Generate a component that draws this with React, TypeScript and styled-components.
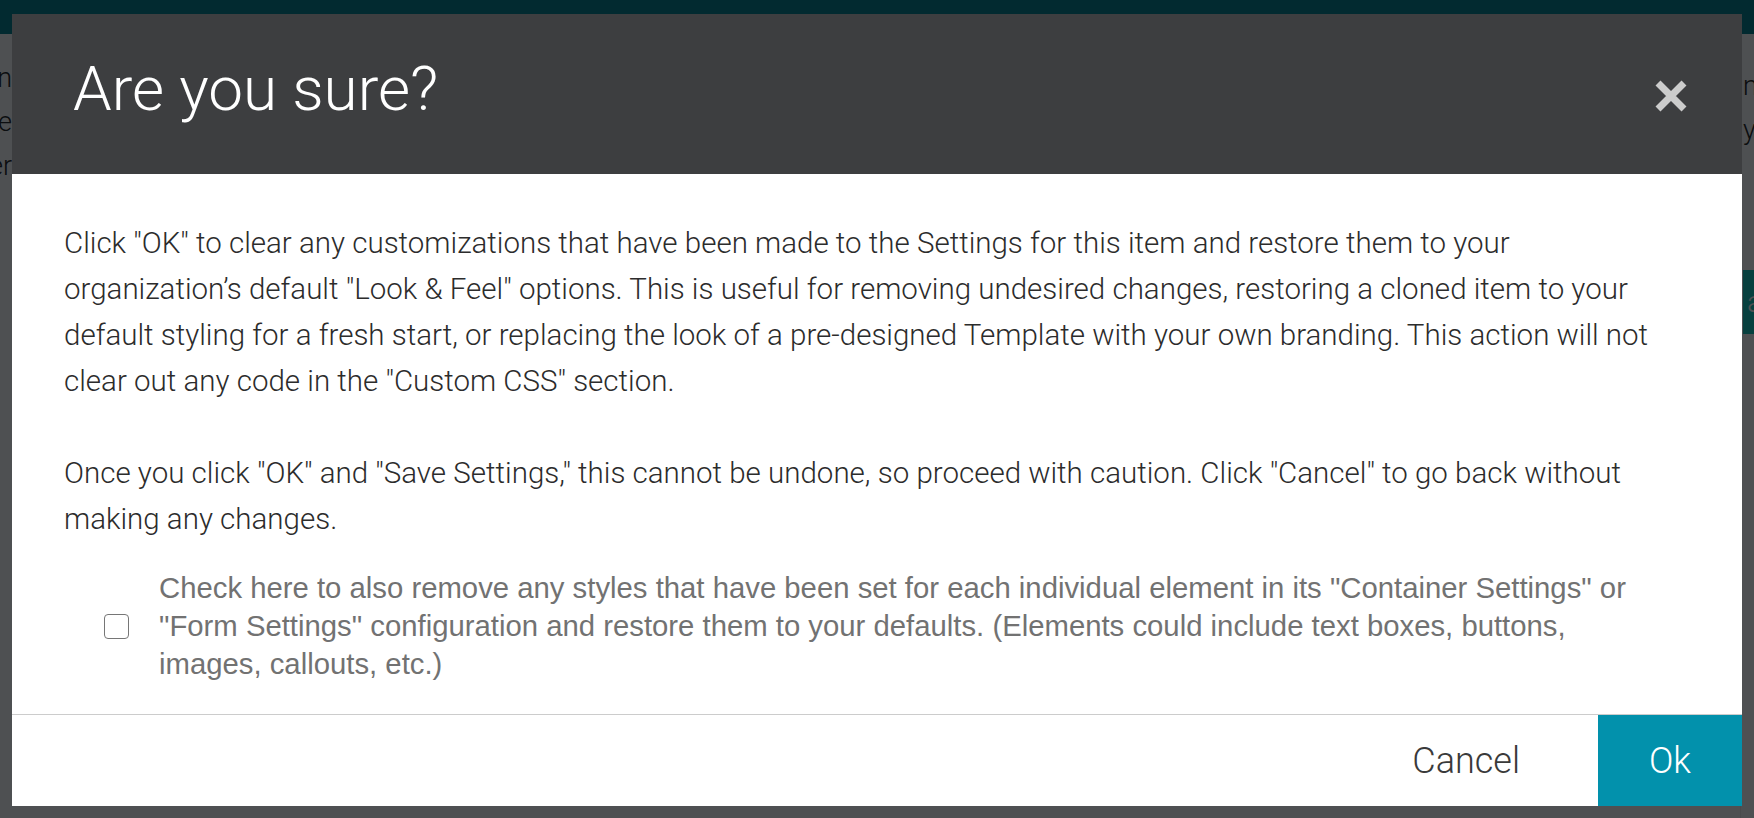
import styled, { createGlobalStyle } from "styled-components";

const GlobalStyle = createGlobalStyle`
  html, body {
    margin: 0;
    padding: 0;
    height: 100%;
    overflow: hidden;
    background: #ffffff;
    font-family: Roboto, "Liberation Sans", sans-serif;
  }
  * {
    box-sizing: border-box;
  }
`;

/* page behind the dialog */
const Page = styled.div`
  display: flex;
  flex-direction: column;
  height: 100vh;
  background: #ffffff;
`;

const TopBar = styled.div`
  height: 34px;
  background: #00808d;
  flex-shrink: 0;
`;

const PageMain = styled.div`
  display: flex;
  justify-content: space-between;
  flex: 1;
`;

const LeftGutter = styled.div`
  width: 12px;
  overflow: hidden;
  display: flex;
  flex-direction: column;
  align-items: flex-end;
  padding-top: 22px;
`;

const RightGutter = styled.div`
  width: 14px;
  overflow: hidden;
  display: flex;
  flex-direction: column;
  padding-top: 30px;
  padding-left: 2px;
  border-left: 1px solid #eeeeee;
`;

const PageLine = styled.div`
  font-family: Roboto, sans-serif;
  font-weight: 300;
  font-size: 27px;
  line-height: 44px;
  white-space: nowrap;
  color: #222222;
`;

const PageButton = styled.div`
  margin-top: 118px;
  height: 64px;
  width: 120px;
  background: #12c8c0;
  color: #ffffff;
  font-family: Roboto, sans-serif;
  font-weight: 300;
  font-size: 30px;
  line-height: 64px;
  padding-left: 4px;
`;

/* dialog */
const Overlay = styled.div`
  position: fixed;
  inset: 0;
  background: rgba(3, 5, 8, 0.7);
  display: flex;
  align-items: flex-start;
  padding: 14px 12px 12px;
`;

const Modal = styled.div`
  width: 100%;
  background: #ffffff;
  display: flex;
  flex-direction: column;
`;

const Header = styled.div`
  height: 160px;
  background: #3d3e40;
  display: flex;
  align-items: center;
  justify-content: space-between;
  padding: 0 55px 0 61px;
`;

const Title = styled.h1`
  margin: 0;
  padding-bottom: 10px;
  font-family: Roboto, sans-serif;
  font-weight: 300;
  font-size: 62px;
  line-height: 64px;
  color: #ffffff;
`;

const CloseButton = styled.button`
  border: none;
  background: none;
  padding: 0;
  width: 32px;
  height: 32px;
  cursor: pointer;
  display: flex;
  margin-top: 3px;
`;

const Body = styled.div`
  padding: 46px 62px 31px 52px;
`;

const Paragraph = styled.p`
  margin: 0 0 46px;
  font-family: Roboto, sans-serif;
  font-weight: 300;
  font-size: 29.5px;
  line-height: 46px;
  color: #2c2c2c;

  &:last-of-type {
    margin-bottom: 27px;
  }
`;

const CheckRow = styled.label`
  display: flex;
  align-items: center;
  gap: 30px;
  padding: 0 24px 0 40px;
  cursor: pointer;
`;

const CheckBox = styled.input`
  appearance: none;
  margin: 0;
  flex-shrink: 0;
  width: 25px;
  height: 25px;
  border: 1.5px solid #767676;
  border-radius: 4px;
  background: #ffffff;
  cursor: pointer;
`;

const CheckText = styled.span`
  font-family: "Liberation Sans", Arial, sans-serif;
  font-size: 29.3px;
  line-height: 38px;
  color: #727272;
`;

const Footer = styled.div`
  height: 92px;
  border-top: 1px solid #cccccc;
  display: flex;
  justify-content: flex-end;
`;

const FooterButton = styled.button<{ $primary?: boolean }>`
  border: none;
  height: 100%;
  min-width: ${(p) => (p.$primary ? "144px" : "auto")};
  padding: ${(p) => (p.$primary ? "0 20px" : "0 78px 0 42px")};
  background: ${(p) => (p.$primary ? "#0291ac" : "#ffffff")};
  color: ${(p) => (p.$primary ? "#ffffff" : "#3a3a3a")};
  font-family: Roboto, sans-serif;
  font-weight: 300;
  font-size: 36px;
  cursor: pointer;
`;

export default function App() {
  return (
    <>
      <GlobalStyle />
      <Page>
        <TopBar />
        <PageMain>
          <LeftGutter>
            <PageLine>Design</PageLine>
            <PageLine>the</PageLine>
            <PageLine>header</PageLine>
          </LeftGutter>
          <RightGutter>
            <PageLine>mobile</PageLine>
            <PageLine>your</PageLine>
            <PageButton>apply</PageButton>
          </RightGutter>
        </PageMain>
      </Page>
      <Overlay>
        <Modal role="dialog" aria-modal="true">
          <Header>
            <Title>Are you sure?</Title>
            <CloseButton aria-label="Close">
              <svg width="32" height="32" viewBox="0 0 32 32">
                <path
                  d="M3 3 L29 29 M29 3 L3 29"
                  stroke="#cccccc"
                  strokeWidth="7"
                  strokeLinecap="butt"
                />
              </svg>
            </CloseButton>
          </Header>
          <Body>
            <Paragraph>
              Click "OK" to clear any customizations that have been made to the Settings for this item and
              restore them to your organization’s default "Look &amp; Feel" options. This is useful for removing
              undesired changes, restoring a cloned item to your default styling for a fresh start, or replacing
              the look of a pre-designed Template with your own branding. This action will not clear out any code
              in the "Custom CSS" section.
            </Paragraph>
            <Paragraph>
              Once you click "OK" and "Save Settings," this cannot be undone, so proceed with caution. Click
              "Cancel" to go back without making any changes.
            </Paragraph>
            <CheckRow>
              <CheckBox type="checkbox" />
              <CheckText>
                Check here to also remove any styles that have been set for each individual element in its
                "Container Settings" or "Form Settings" configuration and restore them to your defaults. (Elements
                could include text boxes, buttons, images, callouts, etc.)
              </CheckText>
            </CheckRow>
          </Body>
          <Footer>
            <FooterButton>Cancel</FooterButton>
            <FooterButton $primary>Ok</FooterButton>
          </Footer>
        </Modal>
      </Overlay>
    </>
  );
}
